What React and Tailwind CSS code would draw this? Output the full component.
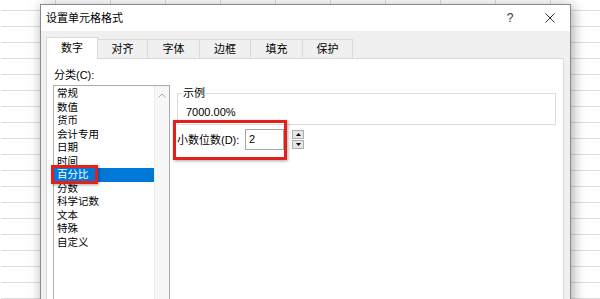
import React from "react";

const rows = Array.from({ length: 20 }, (_, i) => i);
const cols = Array.from({ length: 11 }, (_, i) => i);

const tabs = [
  { label: "数字", w: "w-[52px]", active: true },
  { label: "对齐", w: "w-[50px]" },
  { label: "字体", w: "w-[52px]" },
  { label: "边框", w: "w-[51px]" },
  { label: "填充", w: "w-[52px]" },
  { label: "保护", w: "w-[50px]" },
];

const items = ["常规", "数值", "货币", "会计专用", "日期", "时间", "百分比", "分数", "科学记数", "文本", "特殊", "自定义"];

export default function App() {
  return (
    <div className="relative w-[600px] h-[299px] overflow-hidden bg-white font-['Liberation_Sans','Noto_Sans_CJK_SC',sans-serif] text-black">
      {/* spreadsheet grid */}
      <div className="absolute inset-0 mt-[-5px] pl-[1px] flex flex-col">
        {rows.map((r) => (
          <div key={r} className="flex h-[16px] shrink-0 border-b border-[#dcdcdc]">
            {cols.map((c) => (
              <div key={c} className="w-[55px] shrink-0 border-r border-[#dcdcdc]" />
            ))}
          </div>
        ))}
      </div>

      {/* dialog */}
      <div className="absolute left-[40px] top-[4px] w-[531px] h-[330px] border border-[#8a8a8a] bg-[#f0f0f0] shadow-[2px_2px_12px_rgba(0,0,0,0.35)] flex flex-col">
        {/* title bar */}
        <div className="h-[26px] bg-white flex items-center pl-[5px] shrink-0">
          <span className="text-[11px] leading-[14px]">设置单元格格式</span>
          <div className="ml-auto flex items-center">
            <span className="text-[12px] text-[#333] w-[10px] text-center">?</span>
            <svg className="ml-[30px] mr-[15px]" width="10" height="10" viewBox="0 0 10 10">
              <path d="M0.5 0.5L9.5 9.5M9.5 0.5L0.5 9.5" stroke="#333" strokeWidth="1" />
            </svg>
          </div>
        </div>

        {/* tabs */}
        <div className="flex items-end pl-[5px] pt-[6px] shrink-0">
          {tabs.map((t, i) =>
            t.active ? (
              <div
                key={i}
                className={`${t.w} h-[22px] mb-[-1px] relative z-10 bg-white border border-b-0 border-[#d9d9d9] flex items-center justify-center text-[11px]`}
              >
                {t.label}
              </div>
            ) : (
              <div
                key={i}
                className={`${t.w} h-[19px] bg-[#f0f0f0] border-t border-r border-[#d9d9d9] flex items-center justify-center text-[11px]`}
              >
                {t.label}
              </div>
            )
          )}
        </div>

        {/* panel */}
        <div className="ml-[5px] w-[518px] flex-1 bg-white border border-[#d9d9d9] flex">
          {/* left column */}
          <div className="flex flex-col pt-[9px] pl-[6px]">
            <div className="pl-[1px] text-[11px] leading-[14px]">分类(C):</div>
            <div className="mt-[3px] w-[117px] h-[260px] border border-[#acacac] flex">
              <div className="w-[100px] pt-[1px] flex flex-col">
                {items.map((it, i) =>
                  i === 6 ? (
                    <div key={i} className="h-[13.5px] leading-[13.5px] pl-[3px] text-[10.5px] bg-[#0078d7] text-white">
                      {it}
                    </div>
                  ) : (
                    <div key={i} className="h-[13.5px] leading-[13.5px] pl-[3px] text-[10.5px]">
                      {it}
                    </div>
                  )
                )}
              </div>
              <div className="w-[15px] bg-[#f7f7f7] border-l border-[#ececec] flex justify-center pt-[7px]">
                <svg width="8" height="5" viewBox="0 0 8 5">
                  <path d="M0.5 4.5L4 1L7.5 4.5" stroke="#a6a6a6" strokeWidth="1" fill="none" />
                </svg>
              </div>
            </div>
          </div>

          {/* right column */}
          <div className="flex flex-col pt-[27px] ml-[7px]">
            <fieldset className="w-[379px] border border-[#dcdcdc]">
              <legend className="ml-[4px] px-[1px] text-[11px] leading-[14px]">示例</legend>
              <div className="pl-[8px] pt-[5px] pb-[5px] text-[11px] leading-[14px]">7000.00%</div>
            </fieldset>
            <div className="mt-[4px] h-[21px] flex items-center">
              <span className="w-[68px] text-[11px] leading-[14px]">小数位数(D):</span>
              <div className="w-[39px] h-[21px] border border-[#a8a8a8] bg-white flex items-center pl-[3px] text-[11px]">2</div>
              <div className="ml-[8px] w-[12px] h-[19px] flex flex-col">
                <div className="h-[9px] border border-[#adadad] bg-[#e5e5e5] flex items-center justify-center">
                  <svg width="5" height="3" viewBox="0 0 5 3"><path d="M0 3L2.5 0L5 3Z" fill="#000" /></svg>
                </div>
                <div className="h-[9px] mt-[1px] border border-[#adadad] bg-[#e5e5e5] flex items-center justify-center">
                  <svg width="5" height="3" viewBox="0 0 5 3"><path d="M0 0L5 0L2.5 3Z" fill="#000" /></svg>
                </div>
              </div>
            </div>
          </div>
        </div>
      </div>

      {/* red annotation boxes */}
      <div className="absolute left-[173px] top-[120px] w-[114px] h-[40px] border-[3px] border-[#e3201b] shadow-[1px_1px_3px_rgba(0,0,0,0.35)]" />
      <div className="absolute left-[51px] top-[165px] w-[47px] h-[19px] border-[3px] border-[#e3201b] shadow-[1px_1px_3px_rgba(0,0,0,0.35)]" />
    </div>
  );
}
